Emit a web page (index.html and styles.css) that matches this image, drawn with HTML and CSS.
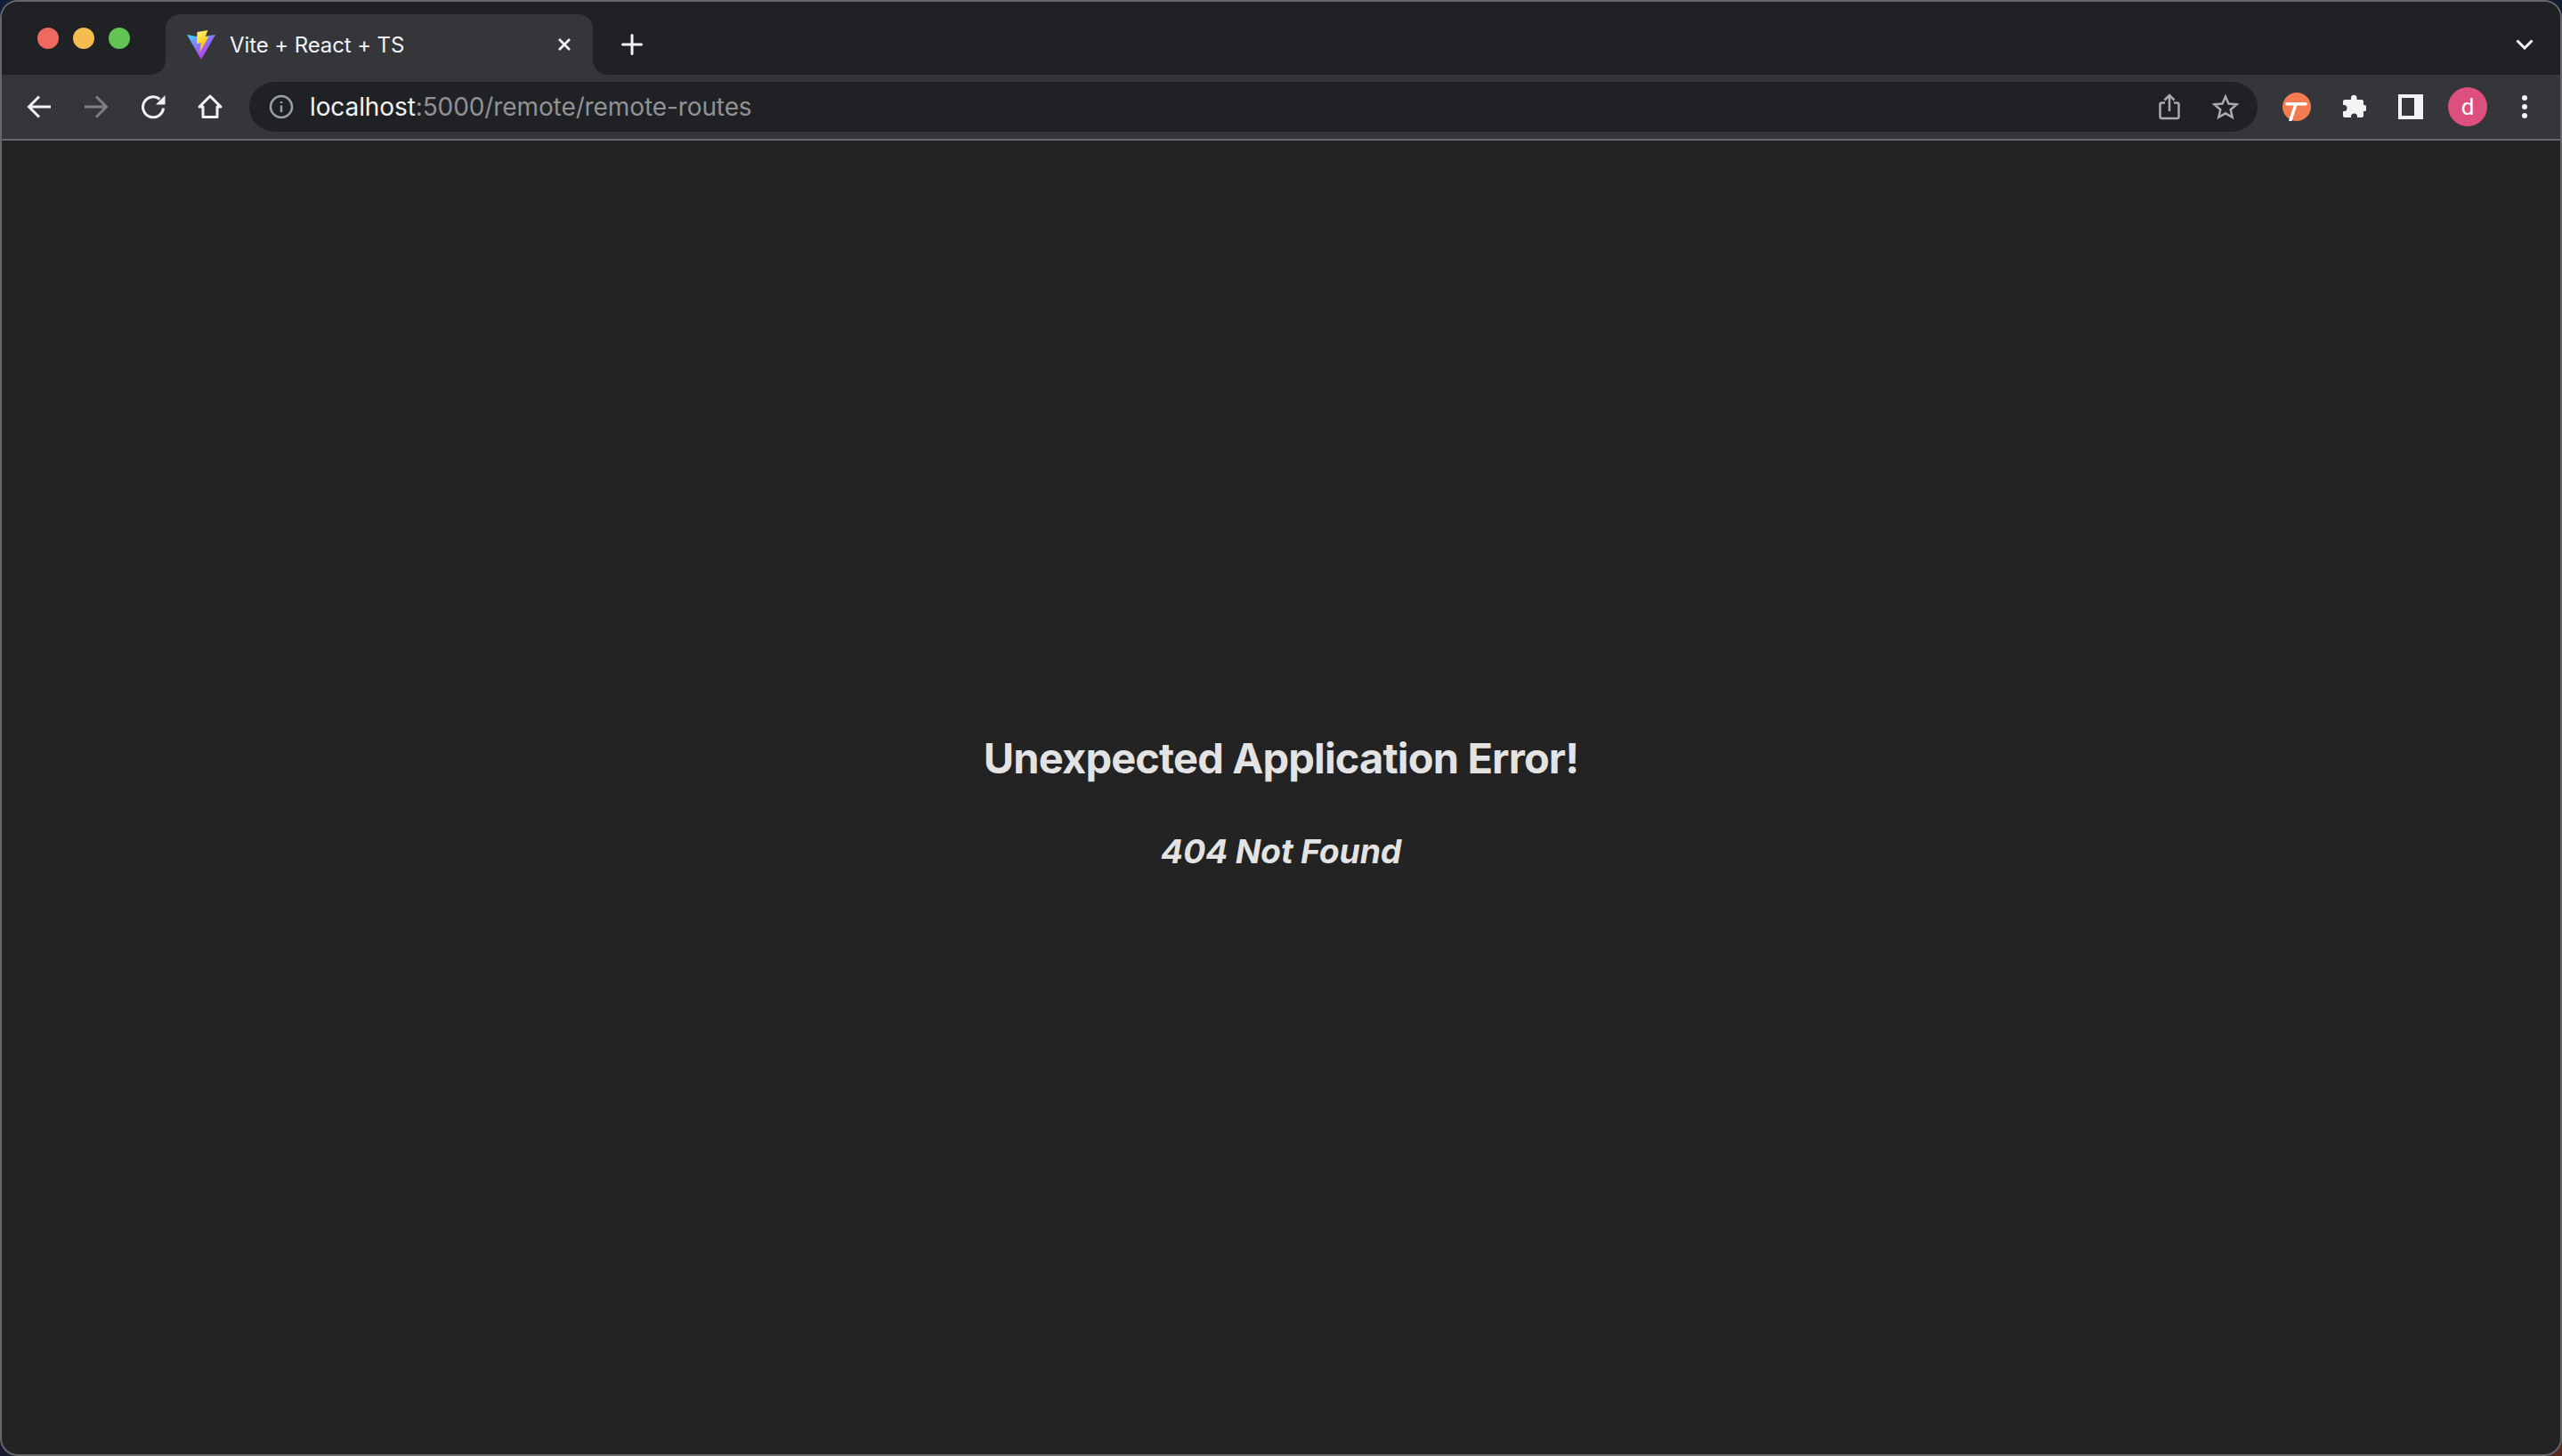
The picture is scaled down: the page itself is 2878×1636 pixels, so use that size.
FILE: index.html
```html
<!DOCTYPE html>
<html lang="en">
<head>
  <meta charset="UTF-8" />
  <title>Vite + React + TS</title>
  <link rel="stylesheet" href="styles.css">
</head>
<body>
  <div class="window">

    <!-- Tab strip -->
    <div class="tabstrip">
      <div class="lights">
        <span class="light red"></span>
        <span class="light yellow"></span>
        <span class="light green"></span>
      </div>
      <div class="tab">
        <svg class="favicon" viewBox="0 0 32 32">
          <defs>
            <linearGradient id="viteA" x1="0" y1="0" x2="0.7" y2="1">
              <stop offset="0" stop-color="#41d1ff"/>
              <stop offset="0.55" stop-color="#8f6cfb"/>
              <stop offset="1" stop-color="#bd34fe"/>
            </linearGradient>
            <linearGradient id="viteB" x1="0" y1="0" x2="0.4" y2="1">
              <stop offset="0" stop-color="#ffea83"/>
              <stop offset="0.5" stop-color="#ffdd35"/>
              <stop offset="1" stop-color="#ffa800"/>
            </linearGradient>
          </defs>
          <path fill="url(#viteA)" d="M0 5 L14 7.500 L32 5 L16.800 31.500 Q16 32.500 15.200 31.500 Z"/>
          <path fill="url(#viteB)" d="M11.500 2 L23.500 0 L20.500 7.500 L24.500 7 L14 25.500 L16 14 L11 15 Z"/>
        </svg>
        <span class="tab-title">Vite + React + TS</span>
        <svg class="tab-close" viewBox="0 0 16 16">
          <path d="M2 2 L14 14 M14 2 L2 14"/>
        </svg>
      </div>
      <svg class="new-tab" viewBox="0 0 24 24">
        <path d="M12 1.500 V22.500 M1.500 12 H22.500"/>
      </svg>
      <svg class="tab-search" viewBox="0 0 20 12">
        <path d="M1.500 1.500 L10 10 L18.500 1.500"/>
      </svg>
    </div>

    <!-- Toolbar -->
    <div class="toolbar">
      <svg class="nav-icon" viewBox="0 0 28 28">
        <path d="M27 14 H3 M14 2.500 L2.500 14 L14 25.500"/>
      </svg>
      <svg class="nav-icon dim" viewBox="0 0 28 28">
        <path d="M1 14 H25 M14 2.500 L25.500 14 L14 25.500"/>
      </svg>
      <svg class="nav-icon" viewBox="0 0 28 28">
        <path d="M25.500 15.500 A11.500 11.500 0 1 1 21.500 5.500"/>
        <path class="solid" d="M17 11.500 H27.500 V1 Z"/>
      </svg>
      <svg class="nav-icon" viewBox="0 0 28 28">
        <path class="round" d="M14 2 L26 14 H22 V25.500 H6 V14 H2 Z"/>
      </svg>

      <div class="omnibox">
        <svg class="info-icon" viewBox="0 0 28 28">
          <circle cx="14" cy="14" r="12"/>
          <path d="M14 12.500 V20 M14 8 V10"/>
        </svg>
        <span class="url"><span class="host">localhost</span>:5000/remote/remote-routes</span>
        <svg class="omni-icon share" viewBox="0 0 24 30">
          <path d="M7 10.500 H3.500 Q1.500 10.500 1.500 12.500 V26 Q1.500 28 3.500 28 H20.500 Q22.500 28 22.500 26 V12.500 Q22.500 10.500 20.500 10.500 H17"/>
          <path d="M12 20 V2.500 M6.500 7.500 L12 2 L17.500 7.500"/>
        </svg>
        <svg class="omni-icon star" viewBox="0 0 30 30">
          <path d="M15 3.500 L18.500 11.500 L27.500 12.300 L20.700 18.200 L22.700 26.800 L15 22.300 L7.300 26.800 L9.300 18.200 L2.500 12.300 L11.500 11.500 Z"/>
        </svg>
      </div>

      <div class="actions">
        <svg class="ext-t" viewBox="0 0 32 32">
          <circle class="ext-t-disc" cx="16" cy="16" r="16"/>
          <path d="M5 12.700 H26 M15 13 L9 31"/>
        </svg>
        <svg class="ext-puzzle" viewBox="0 0 28 28">
          <path d="M11 3.500 A3.300 3.300 0 0 1 17.500 3.500 V6 H23 Q25 6 25 8 V12 H26 A3.400 3.400 0 0 1 26 19 H25 V24 Q25 26 23 26 H18 V25 A3.300 3.300 0 0 0 11 25 V26 H4 Q2 26 2 24 V19 H3 A3.400 3.400 0 0 0 3 12 H2 V8 Q2 6 4 6 H11 Z"/>
        </svg>
        <span class="side-panel"><span class="side-hole"></span></span>
        <span class="avatar">d</span>
        <span class="kebab"><i></i><i></i><i></i></span>
      </div>
    </div>

    <!-- Page -->
    <main class="page">
      <h2>Unexpected Application Error!</h2>
      <h3>404 Not Found</h3>
    </main>
  </div>
</body>
</html>
```
FILE: styles.css
```css
* {
  box-sizing: border-box;
}

html,
body {
  margin: 0;
  height: 100%;
  background: linear-gradient(160deg, #0f2036, #161a2e 60%, #5a2a20);
}

.window {
  height: 100vh;
  display: flex;
  flex-direction: column;
  overflow: hidden;
  border-radius: 20px;
  border: 2px solid #66676a;
  background: #232323;
}

/* Tab strip */
.tabstrip {
  height: 82px;
  flex: none;
  display: flex;
  align-items: flex-end;
  background: #202124;
}

.lights {
  width: 184px;
  height: 82px;
  flex: none;
  display: flex;
  gap: 16px;
  padding: 29px 0 0 40px;
}

.light {
  width: 24px;
  height: 24px;
  border-radius: 50%;
}

.red { background: #ee6a5f; }
.yellow { background: #f5bd4f; }
.green { background: #61c454; }

.tab {
  width: 480px;
  height: 68px;
  flex: none;
  display: flex;
  align-items: center;
  padding: 0 24px 0 24px;
  background: #35363a;
  border-radius: 16px 16px 0 0;
  position: relative;
}

.tab::before,
.tab::after {
  content: "";
  position: absolute;
  bottom: 0;
  width: 16px;
  height: 16px;
  background: radial-gradient(circle at 0 0, transparent 15.5px, #35363a 16px);
}

.tab::before {
  left: -16px;
}

.tab::after {
  right: -16px;
  transform: scaleX(-1);
}

.favicon {
  width: 32px;
  height: 32px;
  flex: none;
}

.tab-title {
  margin-left: 16px;
  flex: 1;
  font: 400 24px "Inter", sans-serif;
  letter-spacing: -0.1px;
  color: #f1f3f4;
  white-space: nowrap;
}

.tab-close {
  width: 16px;
  height: 16px;
  flex: none;
  fill: none;
  stroke: #f1f3f4;
  stroke-width: 2.6;
}

.new-tab {
  width: 24px;
  height: 24px;
  margin: 0 0 22px 32px;
  flex: none;
  fill: none;
  stroke: #f1f3f4;
  stroke-width: 3;
  stroke-linecap: round;
}

.tab-search {
  width: 20px;
  height: 12px;
  margin: 0 30px 28px auto;
  flex: none;
  fill: none;
  stroke: #f1f3f4;
  stroke-width: 3;
}

/* Toolbar */
.toolbar {
  height: 72px;
  flex: none;
  display: flex;
  align-items: center;
  padding-left: 28px;
  background: #35363a;
}

.nav-icon {
  width: 28px;
  height: 28px;
  margin-right: 36px;
  flex: none;
  fill: none;
  stroke: #f1f3f4;
  stroke-width: 3;
}

.nav-icon.dim {
  stroke: #7f8083;
}

.nav-icon .solid {
  fill: #f1f3f4;
  stroke: none;
}

.nav-icon .round {
  stroke-linejoin: round;
}

.omnibox {
  flex: none;
  width: 2256px;
  height: 56px;
  margin-left: -6px;
  display: flex;
  align-items: center;
  padding: 0 21px 0 22px;
  background: #202124;
  border-radius: 28px;
}

.info-icon {
  width: 28px;
  height: 28px;
  flex: none;
  fill: none;
  stroke: #9aa0a6;
  stroke-width: 2.500;
}

.url {
  margin-left: 18px;
  flex: 1;
  font: 400 28px "Inter", sans-serif;
  letter-spacing: -0.1px;
  color: #909295;
  white-space: nowrap;
}

.host {
  color: #f1f3f4;
}

.omni-icon {
  flex: none;
  fill: none;
  stroke: #a9abad;
  stroke-width: 2.500;
}

.share {
  width: 24px;
  height: 30px;
  margin-right: 36px;
}

.star {
  width: 30px;
  height: 30px;
}

.actions {
  flex: 1;
  display: flex;
  align-items: center;
  padding-left: 28px;
}

.ext-t {
  width: 32px;
  height: 32px;
  flex: none;
  fill: none;
  stroke: #fff;
  stroke-width: 3.500;
  stroke-linecap: round;
}

.ext-t-disc {
  fill: #f27c4f;
  stroke: none;
}

.ext-puzzle {
  width: 28px;
  height: 28px;
  margin-left: 34px;
  flex: none;
  fill: #f1f3f4;
}

.side-panel {
  width: 28px;
  height: 28px;
  margin-left: 36px;
  flex: none;
  display: flex;
  padding: 4px;
  background: #f1f3f4;
}

.side-hole {
  width: 14px;
  height: 20px;
  background: #35363a;
}

.avatar {
  width: 44px;
  height: 44px;
  margin-left: 28px;
  flex: none;
  display: flex;
  align-items: center;
  justify-content: center;
  border-radius: 50%;
  background: #dc4f7f;
  color: #fff;
  font: 400 26px "Roboto", sans-serif;
}

.kebab {
  margin-left: 39px;
  flex: none;
  display: flex;
  flex-direction: column;
  gap: 4px;
}

.kebab i {
  width: 6px;
  height: 6px;
  border-radius: 50%;
  background: #f1f3f4;
}

/* Page */
.page {
  flex: 1;
  border-top: 2px solid #66676a;
  display: flex;
  flex-direction: column;
  align-items: center;
  padding-top: 658px;
  font-family: "Inter", sans-serif;
  color: rgba(255, 255, 255, 0.88);
}

h2 {
  margin: 0;
  font-size: 47px;
  font-weight: 700;
  letter-spacing: -0.85px;
  line-height: 72px;
}

h3 {
  margin: 41px 0 0;
  font-size: 37.44px;
  font-weight: 700;
  font-style: italic;
  letter-spacing: -0.2px;
  line-height: 56px;
}
```
